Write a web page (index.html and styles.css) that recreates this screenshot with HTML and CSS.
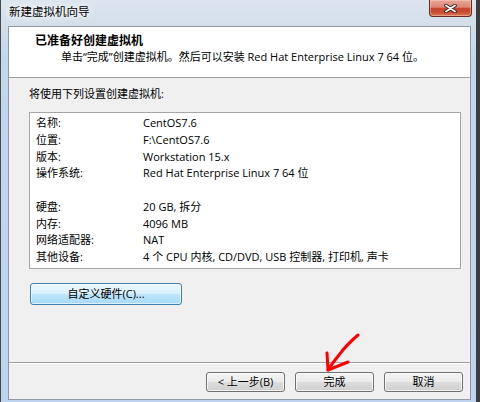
FILE: index.html
```html
<!DOCTYPE html>
<html lang="zh-CN">
<head>
<meta charset="utf-8">
<title>新建虚拟机向导</title>
<link rel="stylesheet" href="styles.css">
</head>
<body>
<div class="window">
  <div class="titlebar">
    <span class="title">新建虚拟机向导</span>
    <div class="close">
      <svg width="13" height="9" viewBox="0 0 13 9">
        <path d="M2 1.5 L11 7.5 M11 1.5 L2 7.5" stroke="#3b1a14" stroke-width="3.6" stroke-linecap="round"/>
        <path d="M2 1.5 L11 7.5 M11 1.5 L2 7.5" stroke="#ffffff" stroke-width="1.8" stroke-linecap="round"/>
      </svg>
    </div>
  </div>
  <div class="client">
    <div class="header">
      <div class="h-title">已准备好创建虚拟机</div>
      <div class="h-sub">单击“完成”创建虚拟机。然后可以安装 Red Hat Enterprise Linux 7 64 位。</div>
    </div>
    <div class="body">
      <div class="intro">将使用下列设置创建虚拟机:</div>
      <div class="summary">
        <div class="row"><span class="k">名称:</span><span class="v">CentOS7.6</span></div>
        <div class="row"><span class="k">位置:</span><span class="v">F:\CentOS7.6</span></div>
        <div class="row"><span class="k">版本:</span><span class="v">Workstation 15.x</span></div>
        <div class="row"><span class="k">操作系统:</span><span class="v">Red Hat Enterprise Linux 7 64 位</span></div>
        <div class="row"></div>
        <div class="row"><span class="k">硬盘:</span><span class="v">20 GB, 拆分</span></div>
        <div class="row"><span class="k">内存:</span><span class="v">4096 MB</span></div>
        <div class="row"><span class="k">网络适配器:</span><span class="v">NAT</span></div>
        <div class="row"><span class="k">其他设备:</span><span class="v">4 个 CPU 内核, CD/DVD, USB 控制器, 打印机, 声卡</span></div>
      </div>
      <button class="btn btn-hot custom">自定义硬件(C)...</button>
    </div>
    <div class="footer">
      <button class="btn nav">&lt; 上一步(B)</button>
      <button class="btn nav">完成</button>
      <button class="btn nav">取消</button>
    </div>
  </div>
  <svg class="arrow" width="480" height="402" viewBox="0 0 480 402">
    <path d="M358 335 C351 341 344 348 339 355 C335 360 331 365 328 370" fill="none" stroke="#f00" stroke-width="3" stroke-linecap="round"/>
    <path d="M327 353 L328 370 L348 362" fill="none" stroke="#f00" stroke-width="3" stroke-linecap="round" stroke-linejoin="round"/>
  </svg>
</div>
</body>
</html>
```
FILE: styles.css
```css
html, body {
  margin: 0;
  padding: 0;
  background: #3a3a3a;
}
body {
  width: 480px;
  height: 402px;
  overflow: hidden;
  font-family: "Open Sans", "Noto Sans CJK SC", sans-serif;
  font-size: 11px;
  color: #000;
}
.window {
  position: relative;
  box-sizing: border-box;
  width: 480px;
  height: 402px;
  border-left: 1px solid #45484c;
  border-right: 4px solid #3b3d40;
  padding: 0 5px 0 7px;
  display: flex;
  flex-direction: column;
  background: linear-gradient(180deg, #dde5ee 0px, #d3deea 26px, #c3d6ec 60px, #bed4ee 100%);
}
.titlebar {
  height: 26px;
  flex: none;
  display: flex;
  align-items: flex-start;
  justify-content: space-between;
}
.title {
  margin: 4px 0 0 1px;
  line-height: 16px;
  font-size: 11.5px;
  color: #000;
  text-shadow: 0 0 6px #fff, 0 0 10px #fff;
}
.close {
  width: 43px;
  height: 17px;
  box-sizing: border-box;
  margin-right: -1px;
  border: 1px solid #6b2a20;
  border-top: none;
  border-radius: 0 0 4px 4px;
  background: linear-gradient(180deg, #e8a798 0%, #db8674 45%, #c8462f 52%, #c84a32 75%, #dc7a52 100%);
  box-shadow: inset 0 0 0 1px rgba(255, 210, 200, 0.45);
  display: flex;
  align-items: center;
  justify-content: center;
}
.close svg { display: block; }
.client {
  height: 374px;
  flex: none;
  box-sizing: border-box;
  border: 1px solid #8e9aa8;
  background: #f0f0f0;
  display: flex;
  flex-direction: column;
}
.header {
  height: 50px;
  flex: none;
  background: #fff;
  border-bottom: 1px solid #a0a0a0;
  padding-top: 6px;
  box-sizing: content-box;
}
.header {
  height: 44px;
}
.h-title {
  padding-left: 26px;
  font-weight: bold;
  font-size: 12px;
  line-height: 16px;
}
.h-sub {
  padding-left: 52px;
  line-height: 16px;
}
.body {
  flex: 1;
  padding: 8px 0 0 20px;
  display: flex;
  flex-direction: column;
  align-items: flex-start;
}
.intro {
  line-height: 16px;
  margin-bottom: 10px;
}
.summary {
  box-sizing: border-box;
  width: 432px;
  height: 157px;
  border: 1px solid #a5a5a5;
  background: #fff;
  padding: 2px 0 0 6px;
}
.row {
  display: flex;
  height: 16.75px;
  line-height: 16.75px;
  white-space: nowrap;
}
.k { width: 107px; flex: none; }
.btn {
  box-sizing: border-box;
  font-family: inherit;
  font-size: 11px;
  color: #000;
  padding: 0;
  border: 1px solid #707070;
  border-radius: 3px;
  background: linear-gradient(180deg, #f2f2f2 0%, #ebebeb 50%, #dddddd 51%, #cfcfcf 100%);
  box-shadow: inset 0 0 0 1px rgba(255, 255, 255, 0.75);
}
.btn-hot {
  border-color: #3c7fb1;
  background: linear-gradient(180deg, #eaf6fd 0%, #d9f0fc 50%, #bee6fd 51%, #a7d9f5 100%);
  box-shadow: inset 0 0 0 1px rgba(255, 255, 255, 0.6);
}
.custom {
  margin: 14px 0 0 1px;
  width: 152px;
  height: 22px;
  line-height: 20px;
}
.footer {
  flex: none;
  border-top: 1px solid #a0a0a0;
  box-shadow: inset 0 1px 0 #fff;
  padding: 9px 7px 7px 0;
  display: flex;
  justify-content: flex-end;
  gap: 10px;
}
.nav {
  width: 79px;
  height: 20px;
  line-height: 18px;
}
.arrow {
  position: absolute;
  left: -1px;
  top: 0;
  pointer-events: none;
}
```
